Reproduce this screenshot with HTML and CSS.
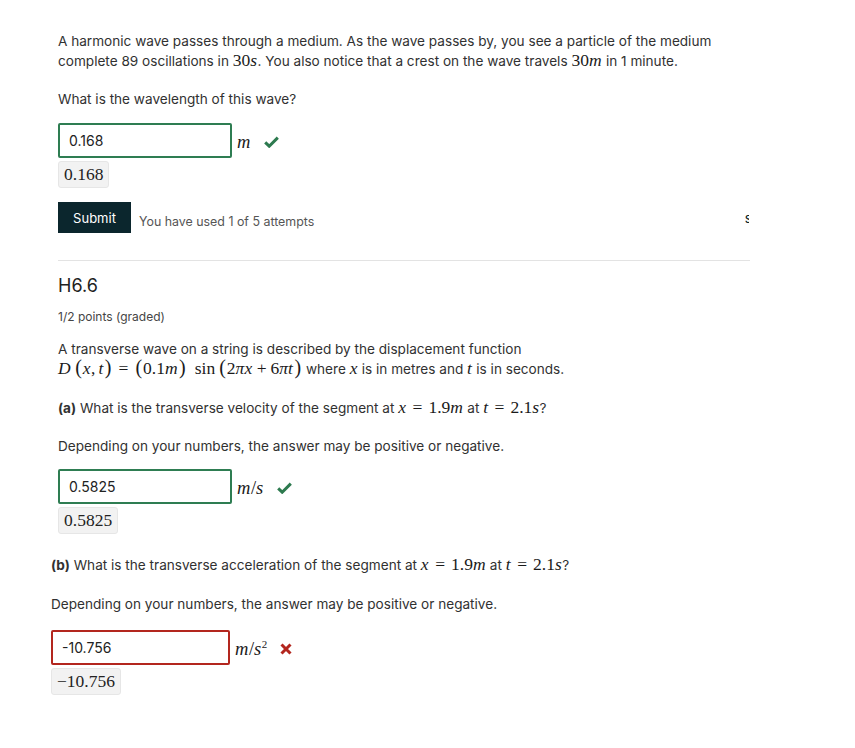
FILE: index.html
```html
<!DOCTYPE html>
<html>
<head>
<meta charset="utf-8">
<link rel="stylesheet" href="styles.css">
</head>
<body>
<div class="page">
  <section class="problem first">
    <p class="text">A harmonic wave passes through a medium. As the wave passes by, you see a particle of the medium complete 89 oscillations in <span class="m">30<i>s</i></span>. You also notice that a crest on the wave travels <span class="m">30<i>m</i></span> in 1 minute.</p>
    <p class="text q">What is the wavelength of this wave?</p>
    <div class="answer">
      <div class="input ok">0.168</div>
      <span class="unit m"><i>m</i></span>
      <svg class="icon" width="15" height="12" viewBox="0 0 15 12"><path d="M1.2 6.4 L5.2 10.2 L13.8 1.6" fill="none" stroke="#2d7a4f" stroke-width="3"/></svg>
    </div>
    <div class="preview">0.168</div>
    <div class="actions">
      <button class="submit">Submit</button>
      <span class="attempts">You have used 1 of 5 attempts</span>
      <span class="clipped">S</span>
    </div>
  </section>
  <hr class="rule">
  <section class="problem">
    <h3 class="title">H6.6</h3>
    <div class="points">1/2 points (graded)</div>
    <p class="text desc">A transverse wave on a string is described by the displacement function <span class="m nw"><i>D</i><span class="th"></span><span class="p">(</span><i>x</i>,<span class="th"></span><i>t</i><span class="p">)</span><span class="rel">=</span><span class="p">(</span>0.1<i>m</i><span class="p">)</span><span class="sp"></span>sin<span class="th"></span><span class="p">(</span>2<i>πx</i><span class="bin">+</span>6<i>πt</i><span class="p">)</span></span> where <span class="m"><i>x</i></span> is in metres and <span class="m"><i>t</i></span> is in seconds.</p>
    <p class="text qa"><b>(a)</b> What is the transverse velocity of the segment at <span class="m nw"><i>x</i><span class="rel">=</span>1.9<i>m</i></span> at <span class="m nw"><i>t</i><span class="rel">=</span>2.1<i>s</i></span>?</p>
    <p class="text q">Depending on your numbers, the answer may be positive or negative.</p>
    <div class="answer tight">
      <div class="input ok">0.5825</div>
      <span class="unit m"><i>m</i>/<i>s</i></span>
      <svg class="icon" width="15" height="12" viewBox="0 0 15 12"><path d="M1.2 6.4 L5.2 10.2 L13.8 1.6" fill="none" stroke="#2d7a4f" stroke-width="3"/></svg>
    </div>
    <div class="preview">0.5825</div>
  </section>
  <section class="problem partb">
    <p class="text"><b>(b)</b> What is the transverse acceleration of the segment at <span class="m nw"><i>x</i><span class="rel">=</span>1.9<i>m</i></span> at <span class="m nw"><i>t</i><span class="rel">=</span>2.1<i>s</i></span>?</p>
    <p class="text qb">Depending on your numbers, the answer may be positive or negative.</p>
    <div class="answer tightb">
      <div class="input bad">-10.756</div>
      <span class="unit m"><i>m</i>/<i>s</i><sup>2</sup></span>
      <svg class="icon" width="12" height="12" viewBox="0 0 12 12"><path d="M1.5 1.5 L10.5 10.5 M10.5 1.5 L1.5 10.5" fill="none" stroke="#b3261e" stroke-width="3"/></svg>
    </div>
    <div class="preview">−10.756</div>
  </section>
</div>
</body>
</html>
```

FILE: styles.css
```css
html, body {
  margin: 0;
  padding: 0;
  background: #fff;
}
body {
  font-family: Inter, "Noto Sans", sans-serif;
  font-size: 13.6px;
  color: #313131;
}
.page {
  padding-top: 32px;
  width: 855px;
}
.problem {
  padding: 0 105px 0 58px;
}
.text {
  margin: 0;
  line-height: 19px;
  font-size: 13.6px;
}
.q {
  margin-top: 19px;
}
.qa {
  margin-top: 19px;
}
.qb {
  margin-top: 20px;
}
.m {
  font-family: "Liberation Serif", "DejaVu Serif", serif;
  font-size: 17.5px;
  color: #1a1a1a;
}
.nw {
  white-space: nowrap;
}
.m i {
  font-style: italic;
  margin-right: 0.5px;
}
.m .p {
  font-size: 20px;
  line-height: 0;
  margin: 0 1px;
}
.m .th {
  display: inline-block;
  width: 3px;
}
.m .sp {
  display: inline-block;
  width: 8px;
}
.m .rel {
  margin: 0 6px;
}
.m .bin {
  margin: 0 4px;
}
.m sup {
  font-size: 11px;
  line-height: 0;
}
b {
  font-weight: 700;
}
.answer {
  display: flex;
  align-items: center;
  margin-top: 14px;
  height: 35px;
}
.answer.tight {
  margin-top: 13px;
}
.answer.tightb {
  margin-top: 16px;
}
.input {
  box-sizing: border-box;
  width: 174px;
  height: 35px;
  border: 2px solid #2e7d52;
  border-radius: 2px;
  padding: 0 9px;
  display: flex;
  align-items: center;
  font-size: 14px;
  color: #222;
}
.input.bad {
  border-color: #b3261e;
  width: 179px;
}
.unit {
  margin-left: 5px;
  font-size: 18.5px;
  position: relative;
  top: 2px;
}
.icon {
  margin-left: 13px;
  position: relative;
  top: 1px;
}
.preview {
  display: inline-block;
  margin-top: 3px;
  padding: 2px 5px 3px 5px;
  background: #f2f2f2;
  border: 1px solid #e6e6e6;
  border-radius: 3px;
  font-family: "Liberation Serif", "DejaVu Serif", serif;
  font-size: 17.5px;
  line-height: 20px;
  color: #222;
}
.actions {
  display: flex;
  align-items: center;
  margin-top: 14px;
  height: 31px;
}
.submit {
  box-sizing: border-box;
  height: 31px;
  width: 73px;
  background: #0b262d;
  color: #fff;
  border: none;
  border-radius: 0;
  font-family: Inter, "Noto Sans", sans-serif;
  font-size: 13px;
  padding: 0;
  margin: 0;
  cursor: pointer;
}
.attempts {
  margin-left: 8px;
  font-size: 12.4px;
  color: #555;
  position: relative;
  top: 4px;
}
.clipped {
  margin-left: auto;
  margin-right: 1px;
  width: 4px;
  overflow: hidden;
  font-size: 10px;
  color: #0b262d;
  font-weight: 600;
  position: relative;
  top: 1px;
}
.rule {
  margin: 27px 105px 0 58px;
  border: none;
  border-top: 1px solid #e3e3e3;
  height: 0;
}
.title {
  margin: 14px 0 0 0;
  font-size: 18px;
  font-weight: 400;
  line-height: 22px;
  color: #222;
}
.points {
  margin-top: 12px;
  font-size: 12px;
  line-height: 16px;
  color: #454545;
}
.desc {
  margin-top: 15px;
}
.partb {
  padding-left: 51px;
  margin-top: 21px;
}
```
